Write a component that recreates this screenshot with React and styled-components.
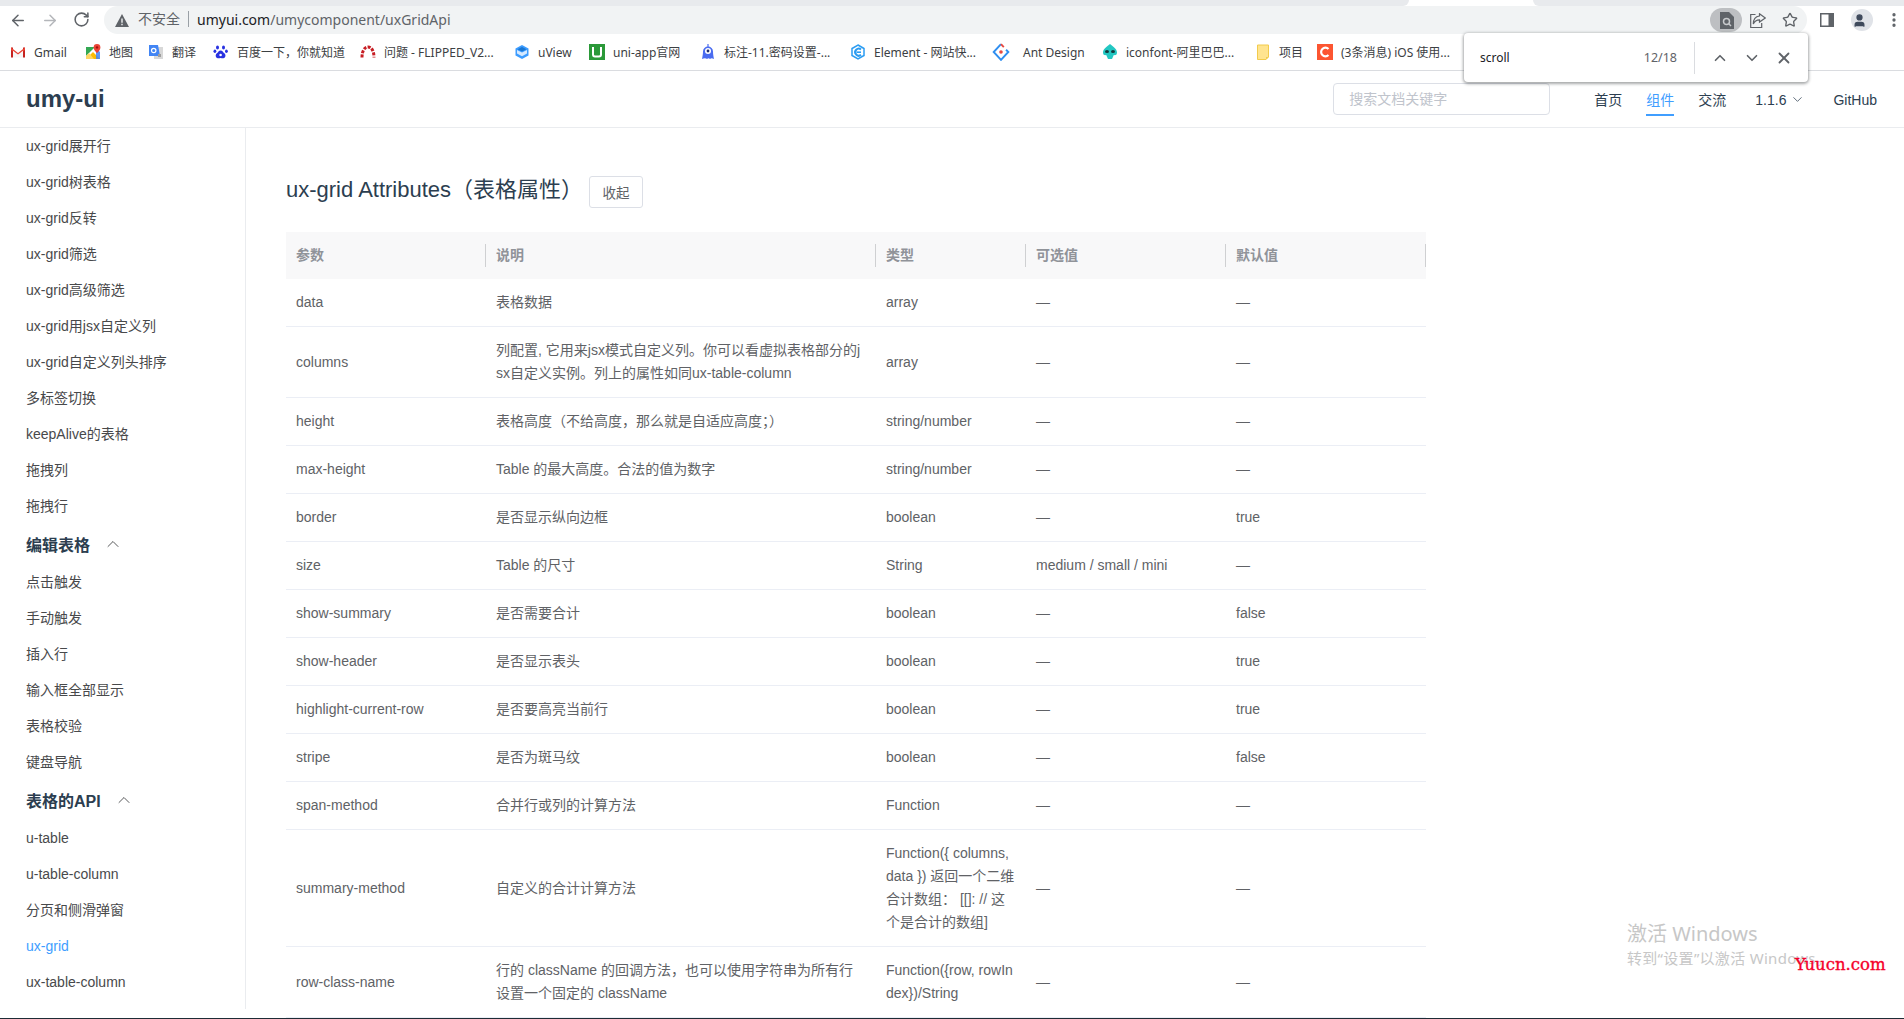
import React from "react";
import styled, { createGlobalStyle } from "styled-components";
import { ArrowLeft, ArrowRight, RotateCw, Star, ChevronUp, ChevronDown, X, EllipsisVertical, User } from "lucide-react";

const Global = createGlobalStyle`
  html, body { margin: 0; padding: 0; height: 100%; overflow: hidden; background: #fff; }
  #root { height: 100%; }
  * { box-sizing: border-box; }
`;

const PAGE_FONT = `"Liberation Sans", "Noto Sans CJK SC", sans-serif`;
const CHROME_FONT = `"Noto Sans", "Noto Sans CJK SC", sans-serif`;

const Page = styled.div`
  position: relative;
  height: 1019px;
  display: flex;
  flex-direction: column;
  overflow: hidden;
  font-family: ${PAGE_FONT};
`;

/* ---------- browser chrome ---------- */
const TabStrip = styled.div`
  display: flex;
  height: 6px;
  background: #fff;
`;
const TabFill = styled.div`
  background: #e8eaed;
  flex: ${(p) => (p.$grow ? 1 : "0 0 371px")};
  border-bottom-left-radius: ${(p) => (p.$grow ? 0 : 6)}px;
  border-bottom-right-radius: ${(p) => (p.$grow ? 6 : 0)}px;
`;
const ActiveTabGap = styled.div`
  flex: 0 0 124px;
`;
const Toolbar = styled.div`
  display: flex;
  align-items: center;
  height: 30px;
  padding-bottom: 2px;
  font-family: ${CHROME_FONT};
`;
const NavIcons = styled.div`
  flex: 0 0 104px;
  display: flex;
  padding-left: 9px;
  gap: 14px;
  color: #5f6368;
`;
const NavIcon = styled.span`
  display: flex;
  width: 18px;
  height: 18px;
  color: ${(p) => (p.$off ? "#b4b6ba" : "#5f6368")};
`;
const UrlBar = styled.div`
  flex: 0 0 1703px;
  height: 28px;
  border-radius: 14px;
  background: #f1f3f4;
  display: flex;
  align-items: center;
  padding: 0 9px 0 11px;
  font-size: 14px;
`;
const UrlText = styled.span`
  display: flex;
  align-items: center;
  margin-top: -2px;
`;
const Insecure = styled.span`
  color: #5f6368;
  margin-left: 9px;
  padding-right: 8px;
  border-right: 1px solid #9aa0a6;
  line-height: 16px;
`;
const UrlHost = styled.span`
  color: #202124;
  margin-left: 8px;
`;
const UrlPath = styled.span`
  color: #5f6368;
`;
const UrlTools = styled.div`
  margin-left: auto;
  display: flex;
  align-items: center;
  gap: 16px;
  color: #5f6368;
`;
const FindPill = styled.div`
  width: 32px;
  height: 24px;
  margin-right: -8px;
  border-radius: 12px;
  background: #bdbfc2;
  display: flex;
  align-items: center;
  justify-content: center;
`;
const ChromeRight = styled.div`
  flex: 1;
  display: flex;
  align-items: center;
  gap: 17px;
  padding-left: 13px;
  color: #5f6368;
  svg:last-child { margin-left: -5px; }
`;
const Avatar = styled.span`
  width: 22px;
  height: 22px;
  border-radius: 50%;
  background: #e0e3e8;
  color: #3f4a5c;
  display: flex;
  align-items: center;
  justify-content: center;
`;
const BookmarkBar = styled.div`
  display: flex;
  align-items: center;
  height: 35px;
  margin-bottom: -1px;
  padding: 0 0 2px 10px;
  border-bottom: 1px solid #dadce0;
  font-family: ${CHROME_FONT};
  font-size: 12px;
  color: #3c4043;
`;
const Bookmark = styled.div`
  flex: 0 0 ${(p) => p.$w}px;
  display: flex;
  align-items: center;
  gap: ${(p) => p.$gap || 8}px;
  white-space: nowrap;
  svg { flex: none; }
`;

const FindBar = styled.div`
  position: absolute;
  left: 1464px;
  top: 33px;
  width: 344px;
  height: 49px;
  background: #fff;
  border-radius: 4px;
  box-shadow: 0 1px 3px 1px rgba(60, 64, 67, 0.45);
  display: flex;
  align-items: center;
  padding-left: 16px;
  font-family: ${CHROME_FONT};
  font-size: 12px;
  color: #202124;
  z-index: 3;
`;
const FindQuery = styled.span`
  flex: 1;
`;
const FindCount = styled.span`
  color: #5f6368;
  font-size: 12.5px;
  padding-right: 17px;
  line-height: 32px;
  border-right: 1px solid #dadce0;
`;
const FindButtons = styled.div`
  display: flex;
  gap: 14px;
  padding: 0 15px 0 16px;
  color: #5f6368;
`;

/* ---------- site header ---------- */
const SiteHeader = styled.header`
  flex: none;
  height: 58px;
  border-bottom: 1px solid #eaecef;
  display: flex;
  align-items: center;
  padding: 1px 27px 0 26px;
`;
const Logo = styled.div`
  font-size: 24px;
  font-weight: 700;
  color: #2c3e50;
  margin-right: auto;
`;
const Search = styled.input`
  width: 217px;
  height: 32px;
  border: 1px solid #dcdfe6;
  border-radius: 4px;
  padding: 0 15px;
  font: 14px ${PAGE_FONT};
  margin-right: 44px;
  outline: none;
  &::placeholder { color: #c0c4cc; opacity: 1; }
`;
const Nav = styled.nav`
  display: flex;
  align-items: center;
  font-size: 14px;
  color: #2c3e50;
`;
const NavLink = styled.a`
  height: 30px;
  line-height: 28px;
  margin-left: ${(p) => p.$gap ?? 24}px;
  border-bottom: 2px solid ${(p) => (p.$active ? "#409eff" : "transparent")};
  color: ${(p) => (p.$active ? "#409eff" : "#2c3e50")};
  margin-top: 3px;
  display: flex;
  align-items: center;
  gap: 4px;
`;

/* ---------- body ---------- */
const Body = styled.div`
  flex: 1;
  min-height: 0;
  display: flex;
  align-items: flex-start;
  overflow: hidden;
`;
const Sidebar = styled.aside`
  flex: none;
  width: 246px;
  height: 881px;
  border-right: 1px solid #eaecef;
  padding-top: 0;
  overflow: hidden;
`;
const SideItem = styled.a`
  display: block;
  height: 36px;
  line-height: 36px;
  padding-left: 26px;
  font-size: 14px;
  color: ${(p) => (p.$active ? "#409eff" : "#48494b")};
`;
const SideHeading = styled.div`
  height: 40px;
  display: flex;
  align-items: center;
  gap: 13px;
  padding-left: 26px;
  font-size: 16px;
  font-weight: 700;
  color: #2c3e50;
  svg { color: #48494b; }
`;
const Main = styled.main`
  flex: none;
  padding: 48px 0 0 40px;
`;
const TitleRow = styled.div`
  display: flex;
  align-items: flex-start;
  gap: 6px;
  height: 32px;
  margin-bottom: 24px;
`;
const Title = styled.h2`
  margin: 0;
  font-size: 22px;
  line-height: 28px;
  font-weight: 400;
  color: #2c3e50;
`;
const Collapse = styled.button`
  width: 54px;
  height: 32px;
  padding: 0;
  background: #fff;
  border: 1px solid #dcdfe6;
  border-radius: 3px;
  font: 13.5px ${PAGE_FONT};
  color: #606266;
`;
const Table = styled.table`
  width: 1140px;
  table-layout: fixed;
  border-collapse: separate;
  border-spacing: 0;
  font-size: 14px;
  color: #606266;
`;
const HeadCell = styled.th`
  height: 47px;
  padding: 0;
  background: #f8f8f9;
  font-weight: 700;
  font-size: 14px;
  color: #909399;
  text-align: left;
  width: ${(p) => p.$w}px;
`;
const HeadLabel = styled.div`
  height: 23px;
  line-height: 23px;
  padding-left: 10px;
  border-right: 1px solid #cfd0d2;
`;
const Cell = styled.td`
  padding: 12px 10px;
  line-height: 23px;
  border-bottom: 1px solid #ebeef5;
  word-break: break-all;
  vertical-align: middle;
`;

/* ---------- overlays ---------- */
const Activation = styled.div`
  position: absolute;
  left: 1627px;
  top: 920px;
  color: #c7c7c7;
  font-family: ${CHROME_FONT};
  white-space: nowrap;
  pointer-events: none;
`;
const ActivationTitle = styled.div`
  font-size: 20px;
  line-height: 28px;
`;
const ActivationHint = styled.div`
  font-size: 15px;
  line-height: 20px;
  letter-spacing: 0.3px;
`;
const Stamp = styled.div`
  position: absolute;
  left: 1795px;
  top: 954px;
  font-family: "DejaVu Serif", serif;
  font-size: 16.5px;
  line-height: 22px;
  color: #f5002a;
  -webkit-text-stroke: 0.35px #f5002a;
  white-space: nowrap;
`;
const BottomEdge = styled.div`
  flex: none;
  height: 1px;
  background: #1e2c36;
`;

/* ---------- drawn icons ---------- */
const S = ({ children, size = 16, box = "0 0 16 16" }) => (
  <svg width={size} height={size} viewBox={box} aria-hidden="true">{children}</svg>
);
const icons = {
  gmail: (
    <S>
      <path d="M1 3.5h2v10H1z" fill="#c5221f" /><path d="M13 3.5h2v10h-2z" fill="#c5221f" />
      <path d="M1 3.5l7 5.5 7-5.5v2.600L8 11.400 1 6.100z" fill="#ea4335" />
      <path d="M3 13.500V6.800l5 3.800 5-3.800v6.700z" fill="#f6f6f6" />
    </S>
  ),
  maps: (
    <S>
      <path d="M1 3h9l-9 9z" fill="#34a853" /><path d="M1 15l7-7 7 7z" fill="#fbbc04" />
      <path d="M10 3h1v12h4V8z" fill="#4285f4" opacity=".85" />
      <path d="M1 12l3-3 5 6H1z" fill="#fdd663" />
      <path d="M12 0a3.400 3.400 0 0 1 3.400 3.400C15.400 6 12 9 12 9S8.600 6 8.600 3.400A3.400 3.400 0 0 1 12 0z" fill="#ea4335" />
      <circle cx="12" cy="3.400" r="1.200" fill="#a50e0e" />
    </S>
  ),
  translate: (
    <S>
      <path d="M6 3h9v12H6z" fill="#d8d8d8" />
      <path d="M1 1h9l2 11H1z" fill="#4285f4" />
      <circle cx="5.700" cy="6.500" r="2.200" fill="none" stroke="#fff" strokeWidth="1.200" />
      <path d="M10 10h3v3h-3z" fill="#9e9e9e" />
    </S>
  ),
  baidu: (
    <S>
      <g fill="#2932e1">
        <ellipse cx="4.500" cy="3.600" rx="1.500" ry="2" /><ellipse cx="10.500" cy="3.600" rx="1.500" ry="2" />
        <ellipse cx="1.900" cy="7.300" rx="1.400" ry="1.800" /><ellipse cx="13.400" cy="7.300" rx="1.400" ry="1.800" />
        <path d="M7.600 6.500c2 0 2.400 1.700 3.700 2.800 1.800 1.400 1.600 4.600-1 4.900-1.100.1-1.800-.3-2.700-.3s-1.700.4-2.700.3c-2.600-.3-2.800-3.500-1-4.900C5.200 8.200 5.600 6.500 7.600 6.500z" />
      </g>
      <circle cx="7.600" cy="11" r="1.300" fill="#fff" />
    </S>
  ),
  arc: (
    <S>
      <path d="M2 13.500C2 7 4.500 3 8 3s6 4 6 10.500" fill="none" stroke="#c71d23" strokeWidth="3" strokeDasharray="3 1.300" />
    </S>
  ),
  uview: (
    <S>
      <path d="M8 1l6.500 3.500v7L8 15l-6.500-3.500v-7z" fill="#3c9cff" />
      <path d="M3 6l5 2.600L13 6v3.500L8 12.200 3 9.500z" fill="#d5e9ff" />
      <path d="M8 3l4.500 2.300L8 7.600 3.500 5.300z" fill="#1976d2" />
    </S>
  ),
  uni: (
    <S>
      <path d="M0 0h16v16H0z" fill="#2b9939" />
      <path d="M4 3v7.500a2 2 0 0 0 2 2h4a2 2 0 0 0 2-2V3" fill="none" stroke="#fff" strokeWidth="2" />
    </S>
  ),
  monster: (
    <S>
      <path d="M2 15c.6-3 1-5 1-7.500a5 5 0 0 1 10 0c0 2.500.4 4.500 1 7.500-2-.9-3-.9-4 0-1-.9-2-.9-3 0-1-.9-3-.9-5 0z" fill="#4a6cf0" />
      <path d="M8 0v3" stroke="#4a6cf0" strokeWidth="1.200" />
      <circle cx="8" cy="7" r="3" fill="#fff" /><circle cx="8" cy="7" r="1.400" fill="#1d2b6b" />
    </S>
  ),
  element: (
    <S>
      <path d="M8 1l6 3.500v7L8 15l-6-3.500v-7z" fill="#fff" stroke="#2b9cf2" strokeWidth="1.500" />
      <path d="M11 5.500A3.500 3.500 0 1 0 11 10.800" fill="none" stroke="#2b9cf2" strokeWidth="2" />
      <path d="M6.500 8.200h4.500" stroke="#2b9cf2" strokeWidth="1.600" />
    </S>
  ),
  ant: (
    <S size={18}>
      <path d="M8 1L1.500 8 8 15l6.500-7-2-2" fill="none" stroke="#2f8ef0" strokeWidth="1.700" />
      <path d="M8 1l2.500 2.600" stroke="#e8483f" strokeWidth="1.700" />
      <circle cx="8" cy="8" r="1.600" fill="#e8483f" />
    </S>
  ),
  iconfont: (
    <S>
      <path d="M8 0c3.300 3 7 5 7 8.500 0 2.800-2 3-3.200 2.600L10 15H6l-1.800-3.900C3 11.500 1 11.300 1 8.500 1 5 4.700 3 8 0z" fill="#23c7c2" />
      <ellipse cx="5" cy="7.500" rx="2" ry="1.600" fill="#12393d" /><ellipse cx="11" cy="7.500" rx="2" ry="1.600" fill="#12393d" />
    </S>
  ),
  folder: (
    <S box="0 0 12 16" size={16}>
      <path d="M.5 1h11v12l-2.500 2.500H.5z" fill="#ffe48f" stroke="#f2cb4d" />
      <path d="M9 13h2.500L9 15.500z" fill="#f2cb4d" />
    </S>
  ),
  c: (
    <S>
      <path d="M0 0h16v16H0z" fill="#fc5531" />
      <path d="M11.500 5A4.300 4.300 0 1 0 11.500 11" fill="none" stroke="#fff" strokeWidth="2.200" />
    </S>
  ),
  warning: (
    <svg width="14" height="13" viewBox="0 0 14 13" aria-hidden="true">
      <path d="M7 0l7 13H0z" fill="#5f6368" />
      <path d="M6.300 4.500h1.400v4.300H6.300zM6.300 9.800h1.400v1.400H6.300z" fill="#f1f3f4" />
    </svg>
  ),
  find: (
    <svg width="15" height="17" viewBox="0 0 15 17" aria-hidden="true">
      <path d="M1 0h9l5 5v12H1z" fill="#5f6368" />
      <circle cx="7.500" cy="9.500" r="3" fill="none" stroke="#c8cacd" strokeWidth="1.500" />
      <path d="M9.800 11.800L12 14" stroke="#c8cacd" strokeWidth="1.500" />
    </svg>
  ),
  share: (
    <svg width="16" height="15" viewBox="0 0 16 15" fill="none" stroke="#5f6368" strokeWidth="1.200" aria-hidden="true">
      <path d="M5.500 1.500H.7v13h11V10" />
      <path d="M9.500.8L15.300 5 9.500 9V6.800C6 6.800 4.500 8 3.300 11c0-5 2.200-7.500 6.200-8z" />
    </svg>
  ),
  panel: (
    <svg width="14" height="14" viewBox="0 0 14 14" aria-hidden="true">
      <path d="M0 0h14v14H0z" fill="#5f6368" /><path d="M1.500 1.500h7v11h-7z" fill="#fff" />
    </svg>
  ),
};

const bookmarks = [
  ["gmail", "Gmail", 75], ["maps", "地图", 63], ["translate", "翻译", 65],
  ["baidu", "百度一下，你就知道", 147], ["arc", "问题 - FLIPPED_V2...", 154], ["uview", "uView", 75],
  ["uni", "uni-app官网", 111], ["monster", "标注-11.密码设置-...", 150], ["element", "Element - 网站快...", 142],
  ["ant", "Ant Design", 110, 13], ["iconfont", "iconfont-阿里巴巴...", 153], ["folder", "项目", 62], ["c", "(3条消息) iOS 使用...", 130],
];

const sideA = ["ux-grid展开行", "ux-grid树表格", "ux-grid反转", "ux-grid筛选", "ux-grid高级筛选", "ux-grid用jsx自定义列", "ux-grid自定义列头排序", "多标签切换", "keepAlive的表格", "拖拽列", "拖拽行"];
const sideB = ["点击触发", "手动触发", "插入行", "输入框全部显示", "表格校验", "键盘导航"];
const sideC = ["u-table", "u-table-column", "分页和侧滑弹窗", "ux-grid", "ux-table-column"];

const columns = [["参数", 200], ["说明", 390], ["类型", 150], ["可选值", 200], ["默认值", 200]];
const rows = [
  ["data", "表格数据", "array", "—", "—"],
  ["columns", "列配置, 它用来jsx模式自定义列。你可以看虚拟表格部分的jsx自定义实例。列上的属性如同ux-table-column", "array", "—", "—"],
  ["height", "表格高度（不给高度，那么就是自适应高度；）", "string/number", "—", "—"],
  ["max-height", "Table 的最大高度。合法的值为数字", "string/number", "—", "—"],
  ["border", "是否显示纵向边框", "boolean", "—", "true"],
  ["size", "Table 的尺寸", "String", "medium / small / mini", "—"],
  ["show-summary", "是否需要合计", "boolean", "—", "false"],
  ["show-header", "是否显示表头", "boolean", "—", "true"],
  ["highlight-current-row", "是否要高亮当前行", "boolean", "—", "true"],
  ["stripe", "是否为斑马纹", "boolean", "—", "false"],
  ["span-method", "合并行或列的计算方法", "Function", "—", "—"],
  ["summary-method", "自定义的合计计算方法", "Function({ columns, data }) 返回一个二维合计数组： [[]: // 这个是合计的数组]", "—", "—"],
  ["row-class-name", "行的 className 的回调方法，也可以使用字符串为所有行设置一个固定的 className", "Function({row, rowIndex})/String", "—", "—"],
];

export default function App() {
  return (
    <Page>
      <Global />
      <TabStrip>
        <TabFill $grow />
        <ActiveTabGap />
        <TabFill />
      </TabStrip>
      <Toolbar>
        <NavIcons>
          <NavIcon><ArrowLeft size={19} strokeWidth={2} /></NavIcon>
          <NavIcon $off><ArrowRight size={19} strokeWidth={2} /></NavIcon>
          <NavIcon><RotateCw size={17} strokeWidth={2.2} /></NavIcon>
        </NavIcons>
        <UrlBar>
          {icons.warning}
          <UrlText>
            <Insecure>不安全</Insecure>
            <UrlHost>umyui.com</UrlHost>
            <UrlPath>/umycomponent/uxGridApi</UrlPath>
          </UrlText>
          <UrlTools>
            <FindPill>{icons.find}</FindPill>
            {icons.share}
            <Star size={16} strokeWidth={2} />
          </UrlTools>
        </UrlBar>
        <ChromeRight>
          {icons.panel}
          <Avatar><User size={15} fill="currentColor" strokeWidth={2} /></Avatar>
          <EllipsisVertical size={18} strokeWidth={2.4} />
        </ChromeRight>
      </Toolbar>
      <BookmarkBar>
        {bookmarks.map(([icon, label, w, gap]) => (
          <Bookmark key={label} $w={w} $gap={gap}>{icons[icon]}<span>{label}</span></Bookmark>
        ))}
      </BookmarkBar>
      <FindBar>
        <FindQuery>scroll</FindQuery>
        <FindCount>12/18</FindCount>
        <FindButtons>
          <ChevronUp size={18} strokeWidth={2.2} />
          <ChevronDown size={18} strokeWidth={2.2} />
          <X size={18} strokeWidth={2.4} />
        </FindButtons>
      </FindBar>
      <SiteHeader>
        <Logo>umy-ui</Logo>
        <Search placeholder="搜索文档关键字" readOnly />
        <Nav>
          <NavLink $gap={0}>首页</NavLink>
          <NavLink $active>组件</NavLink>
          <NavLink>交流</NavLink>
          <NavLink $gap={29}>1.1.6 <ChevronDown size={15} strokeWidth={1.2} /></NavLink>
          <NavLink $gap={28}>GitHub</NavLink>
        </Nav>
      </SiteHeader>
      <Body>
        <Sidebar>
          {sideA.map((t) => <SideItem key={t}>{t}</SideItem>)}
          <SideHeading>编辑表格 <ChevronUp size={20} strokeWidth={1.1} /></SideHeading>
          {sideB.map((t) => <SideItem key={t}>{t}</SideItem>)}
          <SideHeading>表格的API <ChevronUp size={20} strokeWidth={1.1} /></SideHeading>
          {sideC.map((t) => <SideItem key={t} $active={t === "ux-grid"}>{t}</SideItem>)}
        </Sidebar>
        <Main>
          <TitleRow>
            <Title>ux-grid Attributes（表格属性）</Title>
            <Collapse>收起</Collapse>
          </TitleRow>
          <Table>
            <thead>
              <tr>
                {columns.map(([t, w]) => (
                  <HeadCell key={t} $w={w}><HeadLabel>{t}</HeadLabel></HeadCell>
                ))}
              </tr>
            </thead>
            <tbody>
              {rows.map((r) => (
                <tr key={r[0]}>
                  {r.map((c, i) => <Cell key={i}>{c}</Cell>)}
                </tr>
              ))}
            </tbody>
          </Table>
        </Main>
      </Body>
      <BottomEdge />
      <Activation>
        <ActivationTitle>激活 Windows</ActivationTitle>
        <ActivationHint>转到“设置”以激活 Windows。</ActivationHint>
      </Activation>
      <Stamp>Yuucn.com</Stamp>
    </Page>
  );
}
